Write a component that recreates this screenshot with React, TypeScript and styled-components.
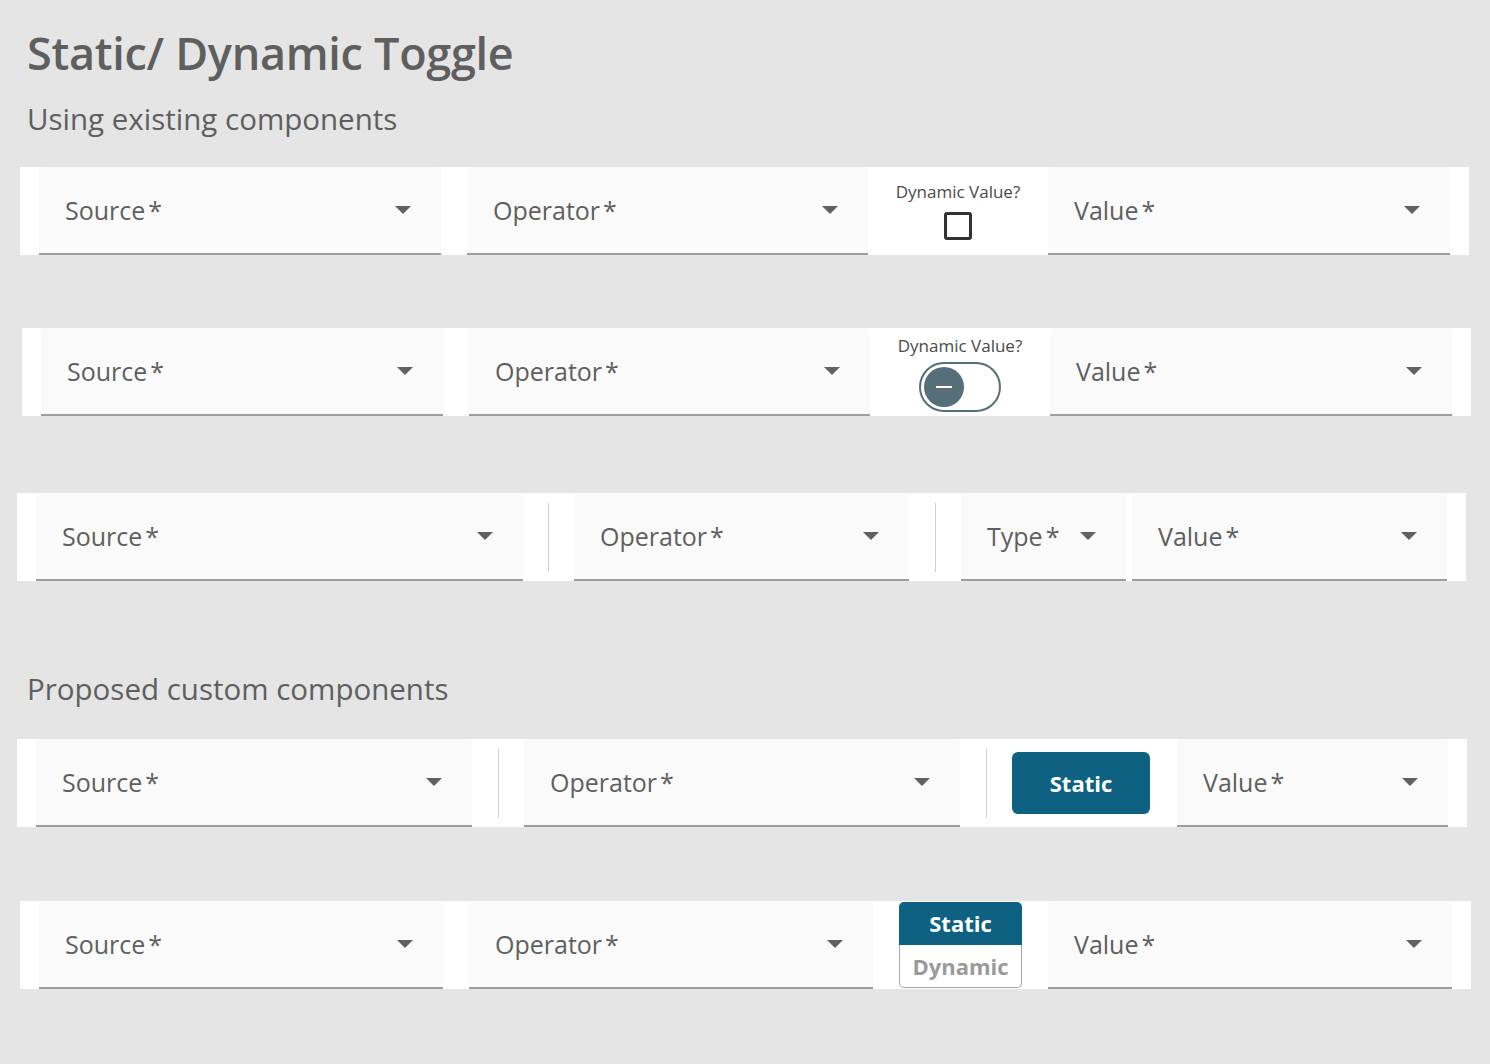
import styled, { createGlobalStyle } from 'styled-components';

const GlobalStyle = createGlobalStyle`
  html, body {
    margin: 0;
    padding: 0;
    background: #e5e5e5;
  }

  body {
    font-family: 'Open Sans', 'Noto Sans', sans-serif;
    color: #5f5f5f;
  }
`;

const Caret = () => (
  <svg width="16" height="8" viewBox="0 0 16 8" aria-hidden="true">
    <polygon points="0,0 16,0 8,8" fill="#616161" />
  </svg>
);

type SelectProps = {
  label: string;
  width: number;
};

const Select = ({ label, width }: SelectProps) => (
  <Field $w={width}>
    <FieldLabel>
      {label}
      <Star>*</Star>
    </FieldLabel>
    <Caret />
  </Field>
);

const App = () => {
  return (
    <Page>
      <GlobalStyle />
      <Title>Static/ Dynamic Toggle</Title>
      <Subtitle>Using existing components</Subtitle>

      {/* checkbox variant */}
      <Band $left={20} $top={28} $w={1449}>
        <Select label="Source" width={402} />
        <Gap $w={26} />
        <Select label="Operator" width={401} />
        <ChoiceCell $pad={15}>
          <ChoiceLabel>Dynamic Value?</ChoiceLabel>
          <Checkbox role="checkbox" aria-checked="false" />
        </ChoiceCell>
        <Select label="Value" width={402} />
      </Band>

      {/* switch variant */}
      <Band $left={22} $top={73} $w={1449}>
        <Select label="Source" width={402} />
        <Gap $w={26} />
        <Select label="Operator" width={401} />
        <ChoiceCell $pad={8}>
          <ChoiceLabel>Dynamic Value?</ChoiceLabel>
          <Switch role="switch" aria-checked="false">
            <Knob />
          </Switch>
        </ChoiceCell>
        <Select label="Value" width={402} />
      </Band>

      {/* type select variant */}
      <Band $left={17} $top={77} $w={1449}>
        <Select label="Source" width={487} />
        <Divider $w={51} />
        <Select label="Operator" width={335} />
        <Divider $w={52} />
        <Select label="Type" width={165} />
        <Gap $w={6} />
        <Select label="Value" width={315} />
      </Band>

      <Subtitle $top={88}>Proposed custom components</Subtitle>

      <Band $left={17} $top={30} $w={1450}>
        <Select label="Source" width={436} />
        <Divider $w={52} />
        <Select label="Operator" width={436} />
        <Divider $w={52} />
        <ButtonCell>
          <StaticButton type="button">Static</StaticButton>
        </ButtonCell>
        <Gap $w={27} />
        <Select label="Value" width={271} />
      </Band>

      <Band $left={20} $top={74} $w={1451}>
        <Select label="Source" width={404} />
        <Gap $w={26} />
        <Select label="Operator" width={404} />
        <Gap $w={26} />
        <Stack>
          <StackOption $active>Static</StackOption>
          <StackOption>Dynamic</StackOption>
        </Stack>
        <Gap $w={26} />
        <Select label="Value" width={404} />
      </Band>
    </Page>
  );
};

const Page = styled.div`
  width: 1490px;
  min-height: 1064px;
  padding-top: 21px;
  box-sizing: border-box;
  display: flex;
  flex-direction: column;
`;

const Title = styled.h1`
  margin: 0 0 0 27px;
  font-size: 45px;
  line-height: 64px;
  font-weight: 600;
  letter-spacing: -0.3px;
  color: #5f5f5f;
`;

const Subtitle = styled.h2<{ $top?: number }>`
  margin: ${(p) => p.$top ?? 14}px 0 0 27px;
  font-size: 29.5px;
  line-height: 40px;
  font-weight: 400;
  color: #5f5f5f;
`;

const Band = styled.div<{ $left: number; $top: number; $w: number }>`
  margin: ${(p) => p.$top}px 0 0 ${(p) => p.$left}px;
  width: ${(p) => p.$w}px;
  height: 88px;
  box-sizing: border-box;
  padding: 0 19px;
  background: #ffffff;
  display: flex;
  align-items: stretch;
`;

const Field = styled.div<{ $w: number }>`
  flex: 0 0 ${(p) => p.$w}px;
  box-sizing: border-box;
  padding: 0 30px 0 26px;
  background: #fafafa;
  border-bottom: 2px solid #9e9e9e;
  border-radius: 4px 4px 0 0;
  display: flex;
  align-items: center;
  justify-content: space-between;
`;

const FieldLabel = styled.span`
  font-size: 25px;
  line-height: 1;
  color: #5f5f5f;
  white-space: nowrap;
`;

const Star = styled.span`
  margin-left: 3px;
`;

const Gap = styled.div<{ $w: number }>`
  flex: 0 0 ${(p) => p.$w}px;
`;

const Divider = styled.div<{ $w: number }>`
  flex: 0 0 ${(p) => p.$w}px;
  display: flex;
  align-items: center;
  justify-content: center;

  &::before {
    content: '';
    width: 1px;
    height: 69px;
    background: #cfcfcf;
  }
`;

const ChoiceCell = styled.div<{ $pad: number }>`
  flex: 0 0 180px;
  box-sizing: border-box;
  padding-top: ${(p) => p.$pad}px;
  display: flex;
  flex-direction: column;
  align-items: center;
`;

const ChoiceLabel = styled.span`
  font-size: 17px;
  line-height: 20px;
  color: #4a4a4a;
  white-space: nowrap;
`;

const Checkbox = styled.span`
  margin-top: 10px;
  width: 28px;
  height: 28px;
  box-sizing: border-box;
  border: 3px solid #333333;
  border-radius: 3px;
`;

const Switch = styled.span`
  margin-top: 6px;
  width: 82px;
  height: 50px;
  box-sizing: border-box;
  border: 2px solid #546e7a;
  border-radius: 25px;
  background: #ffffff;
  display: flex;
  align-items: center;
  padding-left: 3px;
`;

const Knob = styled.span`
  width: 40px;
  height: 40px;
  border-radius: 50%;
  background: #546e7a;
  display: flex;
  align-items: center;
  justify-content: center;

  &::before {
    content: '';
    width: 16px;
    height: 2px;
    background: #ffffff;
  }
`;

const ButtonCell = styled.div`
  flex: 0 0 138px;
  display: flex;
  align-items: center;
`;

const StaticButton = styled.button`
  width: 138px;
  height: 62px;
  border: none;
  border-radius: 6px;
  background: #0e6180;
  color: #ffffff;
  font-family: 'Open Sans', 'Noto Sans', sans-serif;
  font-size: 22px;
  font-weight: 700;
  cursor: pointer;
`;

const Stack = styled.div`
  flex: 0 0 123px;
  display: flex;
  flex-direction: column;
  padding: 1px 0;
`;

const StackOption = styled.div<{ $active?: boolean }>`
  flex: 1;
  display: flex;
  align-items: center;
  justify-content: center;
  box-sizing: border-box;
  font-size: 22px;
  font-weight: 700;
  color: ${(p) => (p.$active ? '#ffffff' : '#9a9a9a')};
  background: ${(p) => (p.$active ? '#0e6180' : '#ffffff')};
  border: ${(p) => (p.$active ? 'none' : '1.5px solid #a8a8a8')};
  border-top: none;
  border-radius: ${(p) => (p.$active ? '5px 5px 0 0' : '0 0 5px 5px')};
`;

export default App;
